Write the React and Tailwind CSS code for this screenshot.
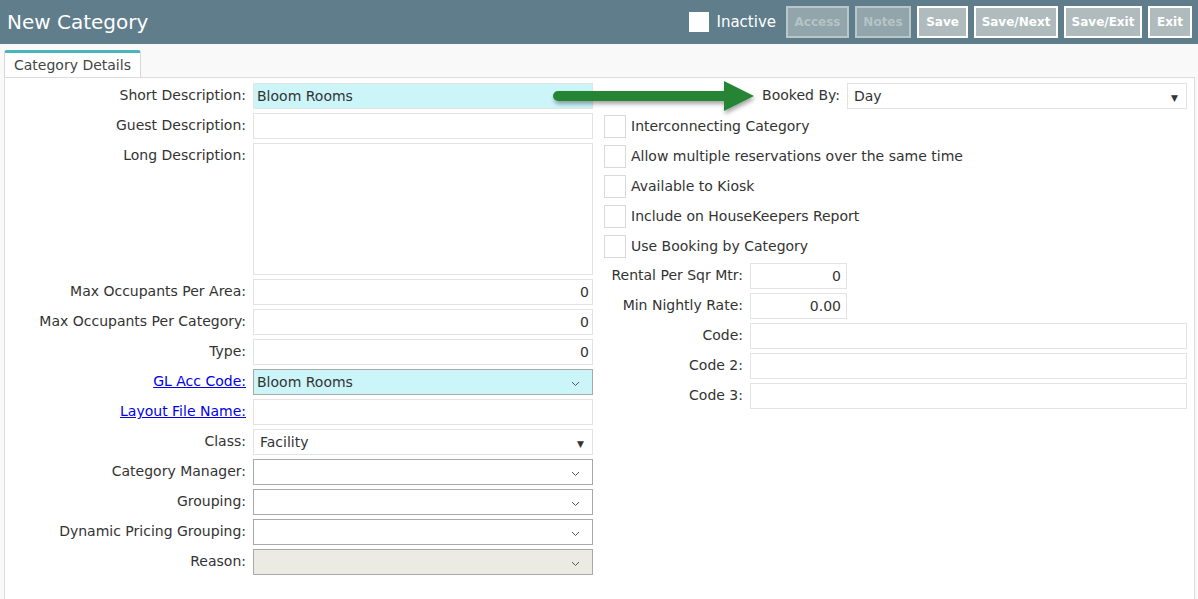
import React from "react";

const font = { fontFamily: '"DejaVu Sans", Verdana, sans-serif' };

const Chevron = () => (
  <svg width="9" height="6" viewBox="0 0 9 6" className="absolute right-[12px] top-[11px]">
    <path d="M1 1 L4.5 4.5 L8 1" fill="none" stroke="#555" strokeWidth="1" />
  </svg>
);

const Triangle = () => (
  <span className="absolute right-[8px] top-[2px] text-[9px] text-[#333]">▼</span>
);

const Label = ({ children, link }) => (
  <div className="w-[242px] pr-[1px] text-right text-[14px] leading-[24px] text-[#333] shrink-0">
    {link ? (
      <a href="#" className="text-[#0000ee] underline">
        {children}
      </a>
    ) : (
      children
    )}
  </div>
);

const Box = ({ value, right, cyan, dark, disabled, chevron, triangle, h = "h-[26px]", w = "w-[340px]" }) => (
  <div
    className={`relative ${w} ${h} border ${dark ? "border-[#a9a9a9]" : "border-[#e3e3e3]"} ${
      cyan ? "bg-[#ccf5fa]" : disabled ? "bg-[#ebebe4]" : "bg-white"
    } text-[14px] leading-[24px] text-[#333] px-[3px] ${right ? "text-right" : ""}`}
  >
    {value}
    {chevron && <Chevron />}
    {triangle && <Triangle />}
  </div>
);

const Row = ({ label, link, children }) => (
  <div className="flex items-start gap-[6px] mb-[4px]">
    <Label link={link}>{label}</Label>
    {children}
  </div>
);

const Check = ({ label }) => (
  <div className="flex items-center gap-[5px] h-[26px] mb-[4px]">
    <div className="w-[22px] h-[23px] border border-[#d9d9d9] bg-white" />
    <span className="text-[14px] text-[#333]">{label}</span>
  </div>
);

const RLabel = ({ children }) => (
  <div className="w-[139px] text-right text-[14px] leading-[24px] text-[#333] shrink-0">{children}</div>
);

const HeaderBtn = ({ children, disabled, w }) => (
  <button
    className={`${w} h-[32px] border-2 text-[12px] font-bold ${
      disabled
        ? "border-[#b9c6ca] bg-[#92a5aa] text-[#b6c3c6]"
        : "border-white bg-[#afbbbc] text-white"
    }`}
  >
    {children}
  </button>
);

export default function App() {
  return (
    <div className="w-[1198px] h-[599px] overflow-hidden bg-[#f9f9f9]" style={font}>
      {/* HEADER */}
      <div className="h-[44px] bg-[#607d8b] flex items-center justify-between pl-[7px] pr-[6px]">
        <h1 className="text-[20px] text-white">New Category</h1>
        <div className="flex items-center gap-[6px]">
          <div className="flex items-center gap-[7px] mr-[4px]">
            <div className="w-[20px] h-[20px] bg-white" />
            <span className="text-[15px] text-white">Inactive</span>
          </div>
          <HeaderBtn disabled w="w-[63px]">Access</HeaderBtn>
          <HeaderBtn disabled w="w-[56px]">Notes</HeaderBtn>
          <HeaderBtn w="w-[51px]">Save</HeaderBtn>
          <HeaderBtn w="w-[84px]">Save/Next</HeaderBtn>
          <HeaderBtn w="w-[78px]">Save/Exit</HeaderBtn>
          <HeaderBtn w="w-[44px]">Exit</HeaderBtn>
        </div>
      </div>

      {/* TAB */}
      <div className="pl-[4px] pt-[6px]">
        <div className="inline-block border-t-[3px] border-t-[#4ab5bd] border-x border-x-[#d6d6d6] rounded-t-[3px] bg-white px-[9px] h-[27px] text-[14px] leading-[24px] text-[#444] -mb-[1px] relative">
          Category Details
        </div>
      </div>

      {/* PANEL */}
      <div className="relative ml-[4px] mr-[3px] h-[600px] border border-[#dcdcdc] bg-white pt-[5px] flex">
        {/* LEFT */}
        <div className="w-[588px] shrink-0">
          <Row label="Short Description:">
            <Box value="Bloom Rooms" cyan />
          </Row>
          <Row label="Guest Description:">
            <Box />
          </Row>
          <Row label="Long Description:">
            <Box h="h-[132px]" />
          </Row>
          <Row label="Max Occupants Per Area:">
            <Box value="0" right />
          </Row>
          <Row label="Max Occupants Per Category:">
            <Box value="0" right />
          </Row>
          <Row label="Type:">
            <Box value="0" right />
          </Row>
          <Row label="GL Acc Code:" link>
            <Box value="Bloom Rooms" cyan dark chevron />
          </Row>
          <Row label="Layout File Name:" link>
            <Box />
          </Row>
          <Row label="Class:">
            <Box value={<span className="pl-[3px]">Facility</span>} triangle />
          </Row>
          <Row label="Category Manager:">
            <Box dark chevron />
          </Row>
          <Row label="Grouping:">
            <Box dark chevron />
          </Row>
          <Row label="Dynamic Pricing Grouping:">
            <Box dark chevron />
          </Row>
          <Row label="Reason:">
            <Box dark disabled chevron />
          </Row>
        </div>

        {/* RIGHT */}
        <div className="ml-[11px] w-[583px]">
          <div className="flex justify-end items-start gap-[7px] mb-[4px]">
            <span className="text-[14px] leading-[24px] text-[#333]">Booked By:</span>
            <Box value={<span className="pl-[3px]">Day</span>} triangle />
          </div>
          <Check label="Interconnecting Category" />
          <Check label="Allow multiple reservations over the same time" />
          <Check label="Available to Kiosk" />
          <Check label="Include on HouseKeepers Report" />
          <Check label="Use Booking by Category" />
          <div className="flex items-start gap-[7px] mb-[4px]">
            <RLabel>Rental Per Sqr Mtr:</RLabel>
            <Box value={<span className="pr-[2px]">0</span>} right w="w-[97px]" />
          </div>
          <div className="flex items-start gap-[7px] mb-[4px]">
            <RLabel>Min Nightly Rate:</RLabel>
            <Box value={<span className="pr-[2px]">0.00</span>} right w="w-[97px]" />
          </div>
          <div className="flex items-start gap-[7px] mb-[4px]">
            <RLabel>Code:</RLabel>
            <Box w="w-[437px]" />
          </div>
          <div className="flex items-start gap-[7px] mb-[4px]">
            <RLabel>Code 2:</RLabel>
            <Box w="w-[437px]" />
          </div>
          <div className="flex items-start gap-[7px] mb-[4px]">
            <RLabel>Code 3:</RLabel>
            <Box w="w-[437px]" />
          </div>
        </div>

        {/* ARROW overlay */}
        <svg
          className="absolute left-[543px] top-[0px] pointer-events-none"
          width="215"
          height="40"
          viewBox="0 0 215 40"
        >
          <defs>
            <filter id="sh" x="-10%" y="-50%" width="120%" height="200%">
              <feDropShadow dx="1" dy="3" stdDeviation="2" floodColor="#000" floodOpacity="0.35" />
            </filter>
          </defs>
          <g filter="url(#sh)">
            <path d="M10 13 L176 13 L176 3 L206 18 L176 33 L176 23 L10 23 A5 5 0 0 1 10 13 Z" fill="#268436" />
          </g>
        </svg>
      </div>
    </div>
  );
}
